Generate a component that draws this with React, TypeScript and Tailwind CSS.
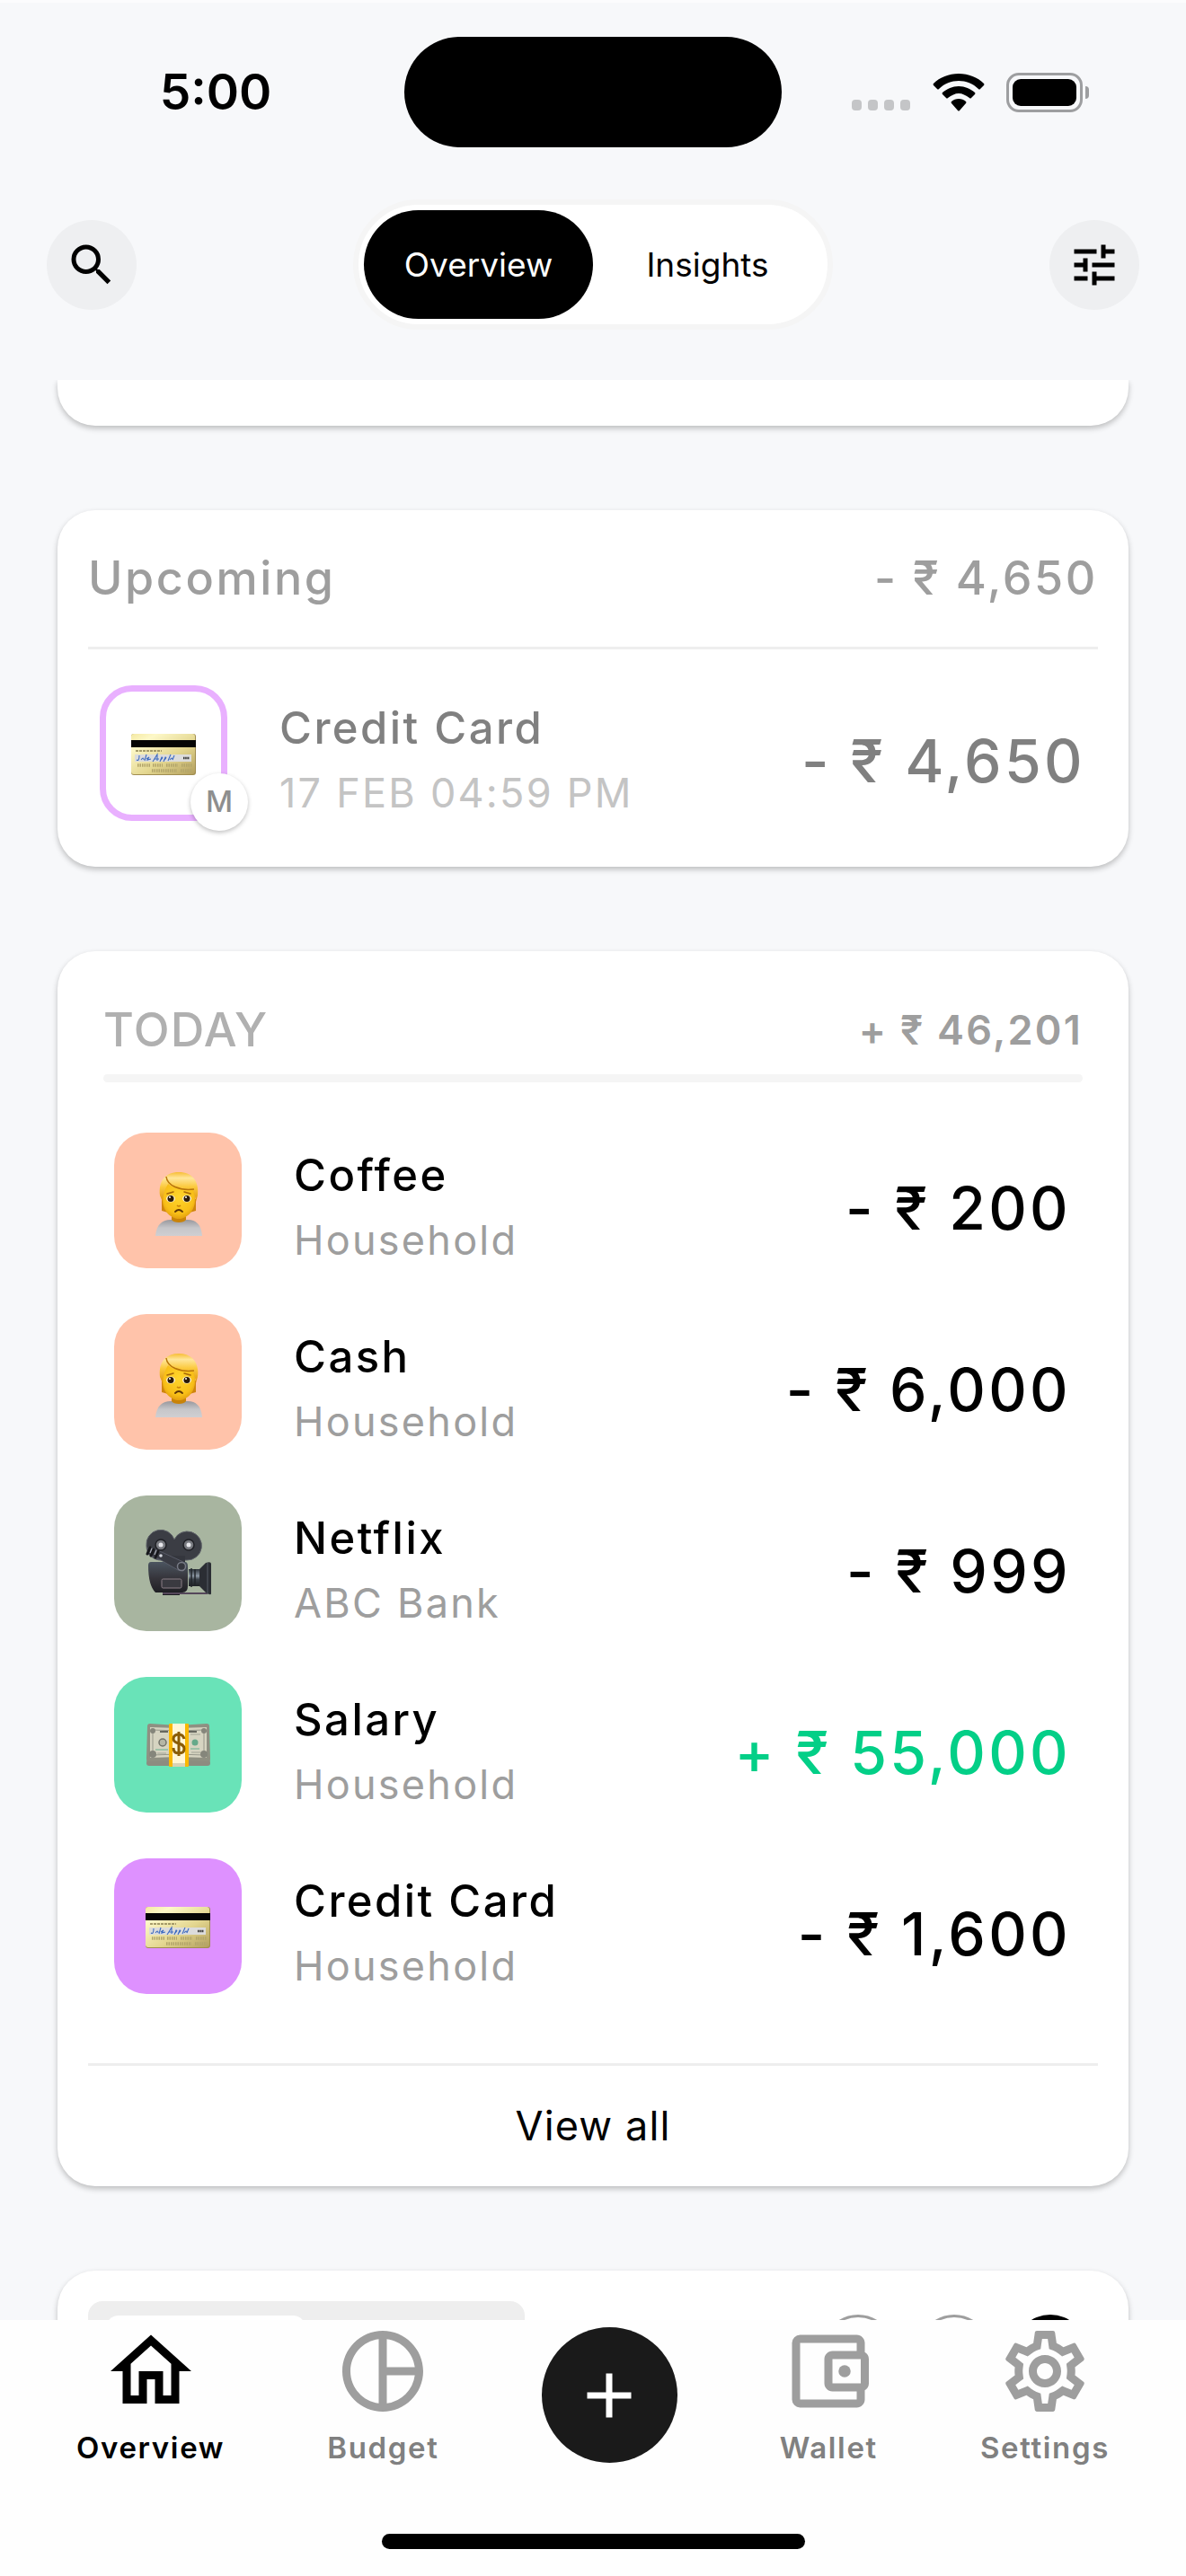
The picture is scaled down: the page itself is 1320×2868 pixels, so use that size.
import React from "react";
import {
  MdAdd,
  MdOutlineAccountBalanceWallet,
  MdOutlineHome,
  MdOutlineSettings,
  MdPieChartOutline,
  MdSearch,
  MdTune,
} from "react-icons/md";

function WorriedPerson() {
  return (
    <svg viewBox="0 0 84 84" className="size-[84px]" aria-hidden="true">
      <defs>
        <radialGradient id="face" cx="50%" cy="40%" r="65%">
          <stop offset="0" stopColor="#ffd52c" />
          <stop offset="0.7" stopColor="#f8bf18" />
          <stop offset="1" stopColor="#dd940a" />
        </radialGradient>
        <linearGradient id="hair" x1="0" y1="0" x2="0" y2="1">
          <stop offset="0" stopColor="#f7bd35" />
          <stop offset="0.2" stopColor="#ffe69a" />
          <stop offset="0.5" stopColor="#fbc93c" />
          <stop offset="1" stopColor="#dd940f" />
        </linearGradient>
        <linearGradient id="shirt" x1="0" y1="0" x2="0" y2="1">
          <stop offset="0" stopColor="#98989d" />
          <stop offset="0.5" stopColor="#c6c6c9" />
          <stop offset="1" stopColor="#cfcfd2" />
        </linearGradient>
      </defs>
      <path d="M17 81C18 68 25 63 34 63H53C62 63 68 68 69 81Z" fill="url(#shirt)" />
      <path d="M35 56H51V63C49 67 37 67 35 63Z" fill="#c98308" />
      <path d="M24 40V53L31 55V40ZM62 40V53L55 55V40Z" fill="#cf850d" />
      <path d="M25 30C25 18 61 18 61 30V41C61 54 51 62 43 62C35 62 25 54 25 41Z" fill="url(#face)" />
      <path
        d="M22 36C20 20 28 10 43 10C58 10 66 20 64 36L62 43C61 35 60 31 58 29C47 30 36 28 31 23C28 29 26 32 25 43Z"
        fill="url(#hair)"
      />
      <path d="M29 15C30 25 44 31 60 29" fill="none" stroke="#b87409" strokeWidth="1.5" />
      <path d="M30 34L37 32M49 32L56 34" stroke="#a86808" strokeWidth="1.5" strokeLinecap="round" />
      <ellipse cx="34" cy="39.5" rx="5" ry="4" fill="#fff3cf" />
      <ellipse cx="52" cy="39.5" rx="5" ry="4" fill="#fff3cf" />
      <circle cx="34" cy="39.5" r="3.5" fill="#2a1a08" />
      <circle cx="52" cy="39.5" r="3.5" fill="#2a1a08" />
      <circle cx="33" cy="38" r="1" fill="#fff" />
      <circle cx="51" cy="38" r="1" fill="#fff" />
      <path d="M41 47Q43 49 45 47" fill="none" stroke="#c98308" strokeWidth="1.5" />
      <path d="M39 54Q43 50 47 54" fill="none" stroke="#5e3605" strokeWidth="1.8" strokeLinecap="round" />
    </svg>
  );
}

function MovieCamera() {
  return (
    <svg viewBox="0 0 84 84" className="size-[84px]" aria-hidden="true">
      <defs>
        <linearGradient id="body" x1="0" y1="0" x2="0" y2="1">
          <stop offset="0" stopColor="#4b5560" />
          <stop offset="0.5" stopColor="#35343a" />
          <stop offset="1" stopColor="#1b1b20" />
        </linearGradient>
        <linearGradient id="lens" x1="0" y1="0" x2="0" y2="1">
          <stop offset="0" stopColor="#2b3138" />
          <stop offset="0.4" stopColor="#8b97a3" />
          <stop offset="0.6" stopColor="#3a4149" />
          <stop offset="1" stopColor="#1f2226" />
        </linearGradient>
      </defs>
      <path
        d="M7 22A16 16 0 0 1 38 15A16 16 0 1 1 52 38H24A16 16 0 0 1 7 22Z"
        fill="#3b3d44"
        stroke="#5b5e66"
        strokeWidth="1"
      />
      <path d="M30 33H50V44H30Z" fill="#34363d" />
      <path d="M12 40H50Q53 40 53 45V67Q53 74 47 74H44V77H25V74H17Q9 66 9 44Q9 40 12 40Z" fill="url(#body)" />
      <path d="M25 74H75V76H25Z" fill="#55475a" />
      <path d="M54 48H68V67H54Z" fill="url(#lens)" />
      <path d="M57 47V68M61 48V67" stroke="#20242a" strokeWidth="1.5" />
      <path d="M66 48L73 41Q79 39 79 42V75Q79 78 73 74L66 67Z" fill="#2b2e34" />
      <path d="M75 41V75" stroke="#565c66" strokeWidth="1" />
      <path d="M9 24L15 25L26 30L48 40Q52 45 48 50L42 49L23 38L8 31Z" fill="#393b43" stroke="#5f6270" strokeWidth="0.8" />
      <circle cx="46" cy="45" r="4.5" fill="#34363d" stroke="#787b86" strokeWidth="1.5" />
      <path d="M11 24L8 31M15 26L12 33M20 28L17 35" stroke="#17181c" strokeWidth="3" strokeLinecap="round" />
      <path d="M13 25L11 30M18 27L16 32" stroke="#a9acb6" strokeWidth="1.2" />
      <circle cx="23" cy="33" r="1.8" fill="#d5d7de" />
      <circle cx="23" cy="21" r="6" fill="#77797f" stroke="#202126" strokeWidth="1.5" />
      <circle cx="23" cy="21" r="2.5" fill="#e8e8ec" />
      <circle cx="54" cy="21" r="6" fill="#77797f" stroke="#202126" strokeWidth="1.5" />
      <circle cx="54" cy="21" r="2.5" fill="#e8e8ec" />
      <rect x="24" y="59" width="22" height="10" rx="1.5" fill="#3a3a40" stroke="#8b7f86" strokeWidth="1" />
    </svg>
  );
}

function Banknotes() {
  return (
    <svg viewBox="0 0 84 84" className="size-[84px]" aria-hidden="true">
      <path d="M8 54L7 62Q7 65 10 65H75Q78 65 78 62L77 54Z" fill="#8d8c80" />
      <path d="M8 21Q8 18 11 18L42 20L74 18Q77 18 77 21L78 57Q78 60 75 60L42 59L10 60Q7 60 7 57Z" fill="#8f9082" />
      <path d="M11 22L42 23L74 22V56L42 55L11 56Z" fill="#d6d4c1" />
      <path d="M14 25L42 26L71 25V53L42 52L14 53Z" fill="none" stroke="#96978a" strokeWidth="1" />
      <g fill="#85867b">
        <circle cx="14" cy="26" r="3" />
        <circle cx="14" cy="52" r="4" />
        <circle cx="71" cy="26" r="3" />
        <circle cx="71" cy="52" r="4" />
      </g>
      <path d="M22 27H31M54 27H63" stroke="#66675e" strokeWidth="2" />
      <circle cx="25" cy="39" r="4" fill="#b5b6a6" stroke="#72736a" strokeWidth="1.5" />
      <circle cx="61" cy="39" r="3.5" fill="#66a98a" />
      <path d="M17 47H31M56 46H66" stroke="#8dbba0" strokeWidth="1.5" />
      <path d="M19 51H29M57 50H67M56 30H67" stroke="#a2a394" strokeWidth="1" />
      <rect x="32" y="18" width="22" height="48" rx="1" fill="#f9b800" />
      <rect x="36" y="18" width="14" height="48" fill="#fff6d6" />
      <path d="M36 62H50V66H36Z" fill="#d9d3b6" />
      <path
        d="M49 35C48 31 46 30 43 30C39 30 37 32 37 35C37 42 49 38 49 46C49 50 46 51 43 51C39 51 37 49 37 45M43 27V54"
        fill="none"
        stroke="#8a5c06"
        strokeWidth="3"
      />
    </svg>
  );
}

function BankCard() {
  return (
    <svg viewBox="0 0 84 84" className="size-[84px] shrink-0" aria-hidden="true">
      <defs>
        <linearGradient id="gold" x1="0" y1="0" x2="1" y2="1">
          <stop offset="0" stopColor="#f4e9a4" />
          <stop offset="0.2" stopColor="#fdf8c8" />
          <stop offset="0.6" stopColor="#e3d68f" />
          <stop offset="1" stopColor="#b39f5e" />
        </linearGradient>
      </defs>
      <rect x="6" y="20" width="72" height="46" rx="3" fill="#a08d50" />
      <rect x="6" y="20" width="71" height="45" rx="3" fill="url(#gold)" />
      <rect x="6" y="27" width="72" height="8" fill="#050505" />
      <path d="M11 39H40" stroke="#8b8050" strokeWidth="1.5" strokeDasharray="3 1" />
      <rect x="10" y="43" width="63" height="8" fill="#dcdcdc" />
      <path
        d="M12 49Q15 51 15 44M17 49Q20 45 20 49M21 50L23 43M23 48L26 46L24 49L28 48M30 51L35 43L35 50M32 48H37M38 51L40 46Q42 46 39 49M42 51L44 46Q46 46 43 49M47 50L50 43M49 49Q52 45 52 49L54 44"
        fill="none"
        stroke="#3e6cc0"
        strokeWidth="1.1"
      />
      <path d="M64 47H71" stroke="#333" strokeWidth="2.5" strokeDasharray="1.5 0.7" />
      <path d="M13 55H27M30 55H41M45 55H58M62 55H74M29 61H57M61 61H74" stroke="#b3a56a" strokeWidth="3.5" strokeDasharray="1.5 1" />
    </svg>
  );
}

type RowProps = {
  icon: React.ReactNode;
  tile: string;
  title: string;
  subtitle: string;
  amount: string;
  titleColor?: string;
  subtitleColor?: string;
  amountColor?: string;
  badge?: string;
};

function TransactionRow({
  icon,
  tile,
  title,
  subtitle,
  amount,
  titleColor = "text-black",
  subtitleColor = "text-[#9e9e9e]",
  amountColor = "text-black",
  badge,
}: RowProps) {
  return (
    <div className="flex items-center gap-[58px]">
      <div className="relative shrink-0 pb-4">
        <div className={`flex h-[151px] w-[142px] items-center justify-center rounded-[36px] ${tile}`}>{icon}</div>
        {badge && (
          <span className="absolute top-[98px] left-[101px] flex size-16 items-center justify-center rounded-full bg-white text-[33px] font-medium text-[#8e8e8e] shadow-[0_2px_5px_rgba(0,0,0,0.25)]">
            {badge}
          </span>
        )}
      </div>
      <div className="min-w-0 flex-1">
        <h3 className={`text-[49px] leading-[72px] font-medium tracking-wider ${titleColor}`}>{title}</h3>
        <p className={`text-[45px] leading-[72px] tracking-wider ${subtitleColor}`}>{subtitle}</p>
      </div>
      <p className={`text-[66px] leading-[72px] font-medium tracking-wider whitespace-nowrap ${amountColor}`}>
        {amount}
      </p>
    </div>
  );
}

const transactions: RowProps[] = [
  { icon: <WorriedPerson />, tile: "bg-[#ffc3aa]", title: "Coffee", subtitle: "Household", amount: "- ₹ 200" },
  { icon: <WorriedPerson />, tile: "bg-[#ffc3aa]", title: "Cash", subtitle: "Household", amount: "- ₹ 6,000" },
  { icon: <MovieCamera />, tile: "bg-[#a8b5a0]", title: "Netflix", subtitle: "ABC Bank", amount: "- ₹ 999" },
  {
    icon: <Banknotes />,
    tile: "bg-[#69e3b8]",
    title: "Salary",
    subtitle: "Household",
    amount: "+ ₹ 55,000",
    amountColor: "text-[#03cf87]",
  },
  { icon: <BankCard />, tile: "bg-[#de91ff]", title: "Credit Card", subtitle: "Household", amount: "- ₹ 1,600" },
];

function StatusBar() {
  return (
    <div className="grid grid-cols-[1fr_420px_1fr] items-center pt-[38px]">
      <time className="pl-[30px] text-center text-[55px] leading-none font-semibold">5:00</time>
      <div className="h-[123px] rounded-full bg-black" />
      <div className="flex items-center justify-center pr-[30px]">
        <div className="flex gap-[7px] pt-7">
          {[0, 1, 2, 3].map((dot) => (
            <span key={dot} className="h-3 w-[11px] rounded-[4px] bg-[#c4c5c7]" />
          ))}
        </div>
        <svg viewBox="0 0 58 42" className="ml-[25px] h-[42px] w-[58px]" aria-label="Wi-Fi">
          <path d="M29 0C40 0 50 4 57 11Q58 12 57 13L53 17Q52 18 51 17C45 11 37 8 29 8C21 8 13 11 7 17Q6 18 5 17L1 13Q0 12 1 11C8 4 18 0 29 0Z" />
          <path d="M29 14C36 14 42 17 47 21Q48 22 47 23L43 27Q42 28 41 27C37 24 33 22 29 22C25 22 21 24 17 27Q16 28 15 27L11 23Q10 22 11 21C16 17 22 14 29 14Z" />
          <path d="M29 28C32 28 35 29 37 31Q38 32 37 33L30 41Q29 42 28 41L21 33Q20 32 21 31C23 29 26 28 29 28Z" />
        </svg>
        <div className="ml-6 flex items-center gap-[3px]">
          <div className="h-11 w-[85px] rounded-[14px] border-[3px] border-[#9d9ea0] p-1">
            <div className="h-full rounded-[9px] bg-black" />
          </div>
          <span className="h-[14px] w-1 rounded-r-full bg-[#9d9ea0]" />
        </div>
      </div>
    </div>
  );
}

function NavItem({ icon, label, active = false }: { icon: React.ReactNode; label: string; active?: boolean }) {
  return (
    <a href="#" aria-current={active ? "page" : undefined} className="flex flex-col items-center">
      <span className={active ? "text-black" : "text-[#9e9e9e]"}>{icon}</span>
      <span
        className={`mt-[7px] text-[33px] leading-[48px] font-semibold tracking-wider ${active ? "text-black" : "text-[#808080]"}`}
      >
        {label}
      </span>
    </a>
  );
}

const cardClass = "rounded-[42px] bg-white shadow-[0_3px_6px_rgba(0,0,0,0.24)]";

export default function App() {
  return (
    <div className="flex h-screen flex-col overflow-hidden bg-[#f7f8fa] font-['Inter',sans-serif] text-black">
      <header className="shrink-0 border-t-[3px] border-[#fcfcfd] pb-14">
        <StatusBar />
        <div className="mt-[58px] flex items-center justify-between px-[52px]">
          <button aria-label="Search" className="flex size-[100px] items-center justify-center rounded-full bg-[#eeeff1]">
            <MdSearch className="size-[60px]" />
          </button>
          <div className="flex rounded-full border-[6px] border-[#f5f5f5] bg-white p-[6px] text-[37px] leading-[48px]">
            <button aria-pressed="true" className="h-[121px] w-[255px] rounded-full bg-black text-white">
              Overview
            </button>
            <button aria-pressed="false" className="h-[121px] w-[255px] rounded-full">
              Insights
            </button>
          </div>
          <button aria-label="Filters" className="flex size-[100px] items-center justify-center rounded-full bg-[#eeeff1]">
            <MdTune className="size-[60px]" />
          </button>
        </div>
      </header>

      <main className="flex min-h-0 flex-1 flex-col gap-[94px] overflow-hidden px-16 *:shrink-0">
        <div className="h-[51px] rounded-b-[42px] bg-white shadow-[0_3px_6px_rgba(0,0,0,0.24)]" />

        <section className={cardClass}>
          <div className="mx-[34px] flex h-[155px] items-center justify-between border-b-[3px] border-[#eeeeee] text-[52px] font-medium text-[#9e9e9e]">
            <h2 className="tracking-wider">Upcoming</h2>
            <p className="tracking-wider">- ₹ 4,650</p>
          </div>
          <div className="pt-10 pr-12 pb-[35px] pl-[47px]">
            <TransactionRow
              icon={<BankCard />}
              tile="border-[7px] border-[#e9b0ff] bg-white"
              title="Credit Card"
              subtitle="17 FEB 04:59 PM"
              amount="- ₹ 4,650"
              titleColor="text-[#808080]"
              subtitleColor="text-[#c4c4c4]"
              amountColor="text-[#808080]"
              badge="M"
            />
          </div>
        </section>

        <section className={cardClass}>
          <div className="px-[51px] pt-[52px]">
            <div className="flex items-center justify-between leading-[72px]">
              <h2 className="text-[52px] font-medium tracking-wide text-[#b0b0b0]">TODAY</h2>
              <p className="text-[45px] font-semibold tracking-wider text-[#9e9e9e]">+ ₹ 46,201</p>
            </div>
            <div className="mt-[13px] h-[9px] rounded-full bg-[#f5f5f5]" />
          </div>
          <div className="mt-14 flex flex-col gap-[35px] pr-16 pl-[63px]">
            {transactions.map((transaction) => (
              <TransactionRow key={transaction.title} {...transaction} />
            ))}
          </div>
          <div className="mx-[34px] mt-[61px] border-t-[3px] border-[#eeeeee]">
            <button className="h-[134px] w-full text-[45px] tracking-wide">View all</button>
          </div>
        </section>

        <section className={cardClass}>
          <div className="flex items-start justify-between p-[34px]">
            <div className="w-[486px] rounded-[16px] bg-[#eeeeee] px-5 py-4">
              <div className="h-[90px] w-[222px] rounded-[14px] bg-white" />
            </div>
            <div className="mt-[15px] mr-[13px] flex gap-[27px]">
              <span className="size-20 rounded-full border-[3px] border-[#9e9e9e]" />
              <span className="size-20 rounded-full border-[3px] border-[#9e9e9e]" />
              <span className="size-20 rounded-full bg-black" />
            </div>
          </div>
        </section>
      </main>

      <nav className="z-10 shrink-0 bg-[#fefefe] pb-[30px]">
        <div className="flex h-[238px] items-start justify-between px-[85px] pt-[3px]">
          <NavItem active label="Overview" icon={<MdOutlineHome className="size-[108px]" />} />
          <NavItem label="Budget" icon={<MdPieChartOutline className="size-[108px]" />} />
          <button
            aria-label="Add transaction"
            className="mt-[5px] flex size-[151px] items-center justify-center rounded-full bg-[#1a1a1a] text-white"
          >
            <MdAdd className="size-[84px]" />
          </button>
          <NavItem label="Wallet" icon={<MdOutlineAccountBalanceWallet className="size-[108px]" />} />
          <NavItem label="Settings" icon={<MdOutlineSettings className="size-[108px]" />} />
        </div>
        <div className="mx-auto h-[17px] w-[471px] rounded-full bg-black" />
      </nav>
    </div>
  );
}
